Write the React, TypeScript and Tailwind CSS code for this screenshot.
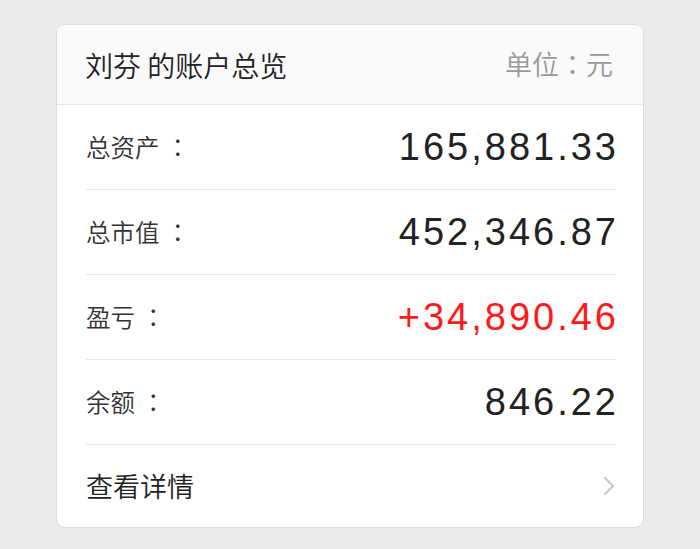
import React from "react";

const rows = [
  { label: "总资产", value: "165,881.33", red: false },
  { label: "总市值", value: "452,346.87", red: false },
  { label: "盈亏", value: "+34,890.46", red: true },
  { label: "余额", value: "846.22", red: false },
];

const cjk = "font-['Noto_Sans_CJK_SC',sans-serif] font-[350]";
const colonFont = "font-['Noto_Sans_CJK_JP',sans-serif]";
const num = "font-['Liberation_Sans','Arial',sans-serif]";

export default function App() {
  return (
    <div className="w-[700px] h-[549px] bg-[#ebebeb] pt-[24px] pl-[56px]">
      <div className="w-[588px] h-[504px] bg-white border border-[#dcdcdc] rounded-[9px] overflow-hidden flex flex-col">
        <div className={`h-[80px] shrink-0 bg-[#fafafa] border-b border-[#e6e6e6] flex items-center justify-between pl-[28px] pr-[30px] ${cjk}`}>
          <span className="text-[28px] text-[#222]">刘芬 的账户总览</span>
          <span className="text-[27px] text-[#999]">
            单位<span className={colonFont}>：</span>元
          </span>
        </div>
        <div className="flex-1 flex flex-col pl-[29px] pr-[26px]">
          {rows.map((r) => (
            <div key={r.label} className="h-[85px] shrink-0 flex items-center justify-between border-b border-[#e6e6e6]">
              <span className={`text-[24.5px] text-[#333] ${cjk}`}>
                {r.label}
                <span className={`${colonFont} ml-[6px]`}>：</span>
              </span>
              <span className={`text-[38px] tracking-[3px] mr-[-2px] ${num} ${r.red ? "text-[#ff1a1a]" : "text-[#222]"}`}>
                {r.value}
              </span>
            </div>
          ))}
          <div className="flex-1 flex items-center justify-between">
            <span className={`text-[27px] text-[#222] ${cjk}`}>查看详情</span>
            <svg width="12" height="20" viewBox="0 0 12 20" className="mr-[2px]">
              <path d="M2 2 L10 10 L2 18" fill="none" stroke="#c7c7cc" strokeWidth="2.2" strokeLinecap="round" strokeLinejoin="round" />
            </svg>
          </div>
        </div>
      </div>
    </div>
  );
}
